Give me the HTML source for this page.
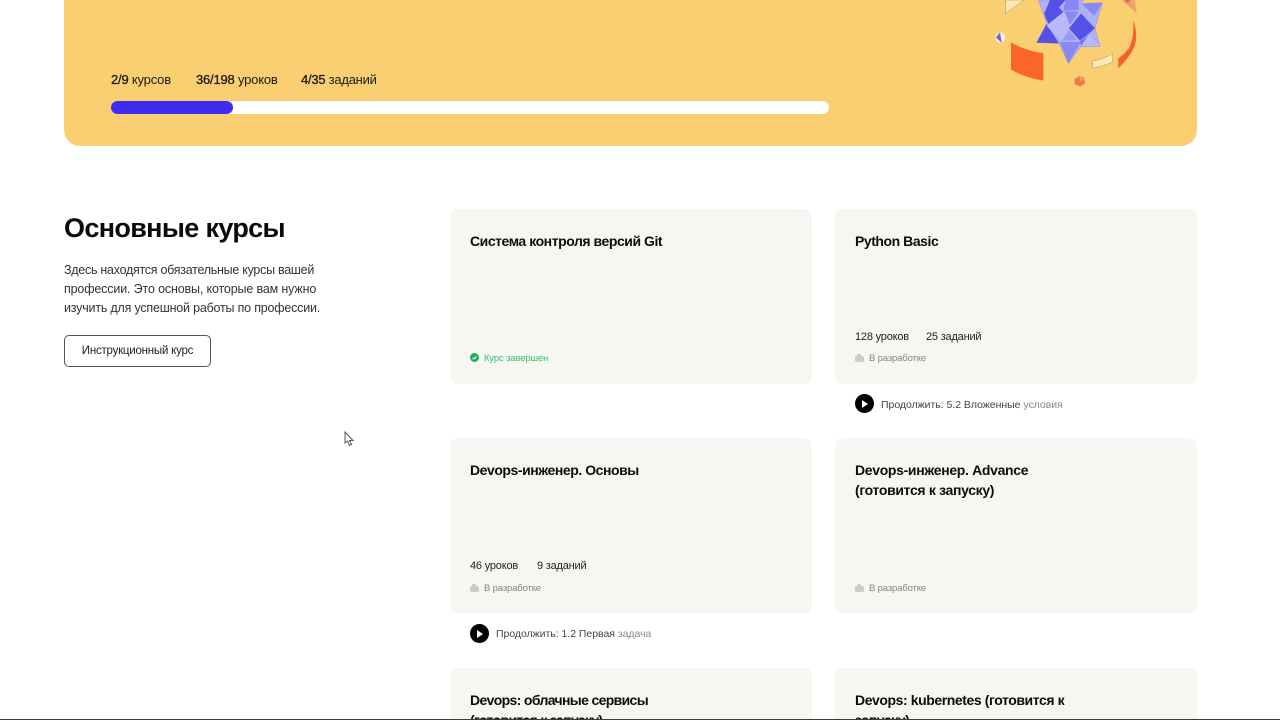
<!DOCTYPE html>
<html lang="ru"><head><meta charset="utf-8">
<style>
html,body{margin:0;padding:0;width:1280px;height:720px;overflow:hidden;background:#fff}
body{position:relative;font-family:"Liberation Sans",sans-serif;color:#0a0a0a}
.a{position:absolute;white-space:nowrap}
.hero{position:absolute;left:64px;top:-100px;width:1133px;height:246px;background:#f9cf72;border-radius:16px}
.bar{position:absolute;left:111px;top:101px;width:718px;height:13px;border-radius:7px;background:#fff}
.fill{position:absolute;left:111px;top:101px;width:122px;height:13px;border-radius:7px;background:#3f2cf0}
.stat{font-size:13px;line-height:16px;top:72px;color:#1c1a14;letter-spacing:-.2px}
.stat b{font-weight:400;-webkit-text-stroke:.3px #1c1a14}
h1{margin:0;font-size:27px;line-height:36px;font-weight:700;left:64px;top:210px;letter-spacing:-.65px}
.p{font-size:12.5px;left:64px;line-height:19px;color:#333}
.btn{position:absolute;left:64px;top:335px;width:145px;height:30px;border:1px solid #555;border-radius:5px;font-size:11.5px;line-height:31px;text-align:center;color:#222;letter-spacing:-.22px}
.card{position:absolute;width:362px;height:175px;background:#f6f7f3;border-radius:8px}
.t{font-size:14px;font-weight:700;line-height:19.5px;color:#0c0c0c;letter-spacing:-.45px}
.m{font-size:11px;line-height:14px;color:#222;letter-spacing:-.2px}
.s{font-size:9.5px;line-height:12px;color:#85857f;letter-spacing:-.15px}
.ic{position:absolute;width:9px;height:6px;background:#cdcdc8;border-radius:2px}
.ic:before{content:"";position:absolute;left:2px;top:-2px;width:4px;height:2px;background:#cdcdc8;border-radius:1px 1px 0 0}
.go{font-size:10.5px;line-height:14px;color:#444;letter-spacing:-.03px}
.pl{position:absolute;width:19px;height:19px;background:#000;border-radius:50%}
.pl:after{content:"";position:absolute;left:7px;top:5.500px;border-left:6.500px solid #fff;border-top:4px solid transparent;border-bottom:4px solid transparent}
</style></head><body>
<div class="hero"></div>
<svg class="a" style="left:0;top:0;filter:blur(.35px)" width="1280" height="100" viewBox="0 0 1280 100">
<g transform="translate(995 0) scale(.3333)">
<polygon points="32,40 32,0 88,0" fill="#fbe7b5" stroke="#a8925f" stroke-width="1.500"/>
<polygon points="380,0 425,40 420,0" fill="#f2a06c"/>
<circle cx="398" cy="0" r="8" fill="#d2705a"/>
<circle cx="16" cy="113" r="15" fill="#fbeecb"/>
<polygon points="3,113 15,97 20,128" fill="#6a62e8"/>
<path d="M48 127 C80 145 110 155 145 160 L145 242 C105 235 75 225 48 208Z" fill="#fb6529"/>
<path d="M292 183 C315 180 335 172 353 161 L353 186 C335 195 315 200 293 205Z" fill="#fbe9b9" stroke="#a8925f" stroke-width="1.500"/>
<path d="M415 60 C425 90 426 120 418 140 C410 160 390 185 370 205 L370 175 C385 165 400 150 406 137 C414 115 416 90 415 60Z" fill="#f4612a"/>
<polygon points="252,228 268,233 270,250 256,260 240,253 238,238" fill="#f4794a"/>
<polygon points="252,228 270,236 256,243" fill="#e8a070"/>
<polygon points="130,0 265,0 262,10 323,8 300,85 315,140 258,140 220,190 192,130 125,128 155,70" fill="#aeb0fa" stroke="#7b76d8" stroke-width="1"/>
<polygon points="165,0 212,0 155,62 148,40" fill="#5550e6"/>
<polygon points="155,72 192,130 125,128" fill="#5550e6"/>
<polygon points="155,78 205,36 245,78 200,122" fill="#b9bafc"/>
<polygon points="212,0 250,0 252,30 205,32" fill="#8a88f2"/>
<polygon points="208,34 252,34 225,75" fill="#8a88f2"/>
<polygon points="258,40 300,85 255,122 222,85" fill="#5550e6"/>
<polygon points="262,12 323,8 298,48" fill="#8a88f2"/>
<polygon points="222,90 245,120 200,122" fill="#9a98f5"/>
<polygon points="195,126 258,126 220,190" fill="#8a88f2"/>
<polygon points="258,138 282,105 315,140" fill="#b9bafc"/>
<polygon points="255,125 296,90 280,105 258,138" fill="#7570ec"/>
<polygon points="205,36 160,72 150,44 188,18" fill="#5550e6"/>
</g>
</svg>
<div class="bar"></div><div class="fill"></div>
<div class="a stat" style="left:111px"><b>2/9</b> курсов</div>
<div class="a stat" style="left:196px"><b>36/198</b> уроков</div>
<div class="a stat" style="left:301px;letter-spacing:-.25px"><b>4/35</b> заданий</div>

<h1 class="a">Основные курсы</h1>
<div class="a p" style="top:261px;letter-spacing:-.27px">Здесь находятся обязательные курсы вашей</div>
<div class="a p" style="top:280px;letter-spacing:-.15px">профессии. Это основы, которые вам нужно</div>
<div class="a p" style="top:299px;letter-spacing:-.2px">изучить для успешной работы по профессии.</div>
<div class="btn">Инструкционный курс</div>
<svg class="a" style="left:344px;top:431px" width="11" height="16" viewBox="0 0 11 16"><path d="M1 1 L1 12 L3.500 10 L5.500 14.500 L7.500 13.500 L5.500 9.500 L9 9.500Z" fill="#fff" stroke="#555" stroke-width="1"/></svg>

<div class="card" style="left:450px;top:209px"></div>
<div class="card" style="left:835px;top:209px"></div>
<div class="card" style="left:450px;top:438px;height:176px"></div>
<div class="card" style="left:835px;top:438px;height:176px"></div>
<div class="card" style="left:450px;top:668px;height:60px"></div>
<div class="card" style="left:835px;top:668px;height:60px"></div>

<div class="a t" style="left:470px;top:232px">Система контроля версий Git</div>
<div class="a t" style="left:855px;top:232px">Python Basic</div>
<div class="a t" style="left:470px;top:461px">Devops-инженер. Основы</div>
<div class="a t" style="left:855px;top:461px;letter-spacing:-.33px">Devops-инженер. Advance<br>(готовится к запуску)</div>
<div class="a t" style="left:470px;top:691px;letter-spacing:-.65px">Devops: облачные сервисы<br>(готовится к запуску)</div>
<div class="a t" style="left:855px;top:691px;letter-spacing:-.42px">Devops: kubernetes (готовится к<br>запуску)</div>

<svg class="a" style="left:470px;top:353px" width="10" height="10" viewBox="0 0 10 10"><circle cx="4.500" cy="4.500" r="4.500" fill="#1fae5a"/><path d="M2.500 4.700 L4 6 L6.500 3.300" stroke="#fff" fill="none" stroke-width="1"/></svg>
<div class="a s" style="left:484px;top:353px;color:#38bd6c">Курс завершен</div>

<div class="a m" style="left:855px;top:330px">128 уроков</div>
<div class="a m" style="left:926px;top:330px">25 заданий</div>
<div class="ic" style="left:855px;top:356px"></div>
<div class="a s" style="left:869px;top:353px">В разработке</div>
<div class="pl" style="left:855px;top:394px"></div>
<div class="a go" style="left:881px;top:398px">Продолжить: 5.2 Вложенные <span style="color:#888">условия</span></div>

<div class="a m" style="left:470px;top:559px">46 уроков</div>
<div class="a m" style="left:537px;top:559px">9 заданий</div>
<div class="ic" style="left:470px;top:586px"></div>
<div class="a s" style="left:484px;top:583px">В разработке</div>
<div class="pl" style="left:470px;top:624px"></div>
<div class="a go" style="left:496px;top:627px">Продолжить: 1.2 Первая <span style="color:#888">задача</span></div>

<div class="ic" style="left:855px;top:586px"></div>
<div class="a s" style="left:869px;top:583px">В разработке</div>

<div class="a" style="left:0;top:719px;width:1280px;height:1px;background:#3c3c3c"></div>
</body></html>
